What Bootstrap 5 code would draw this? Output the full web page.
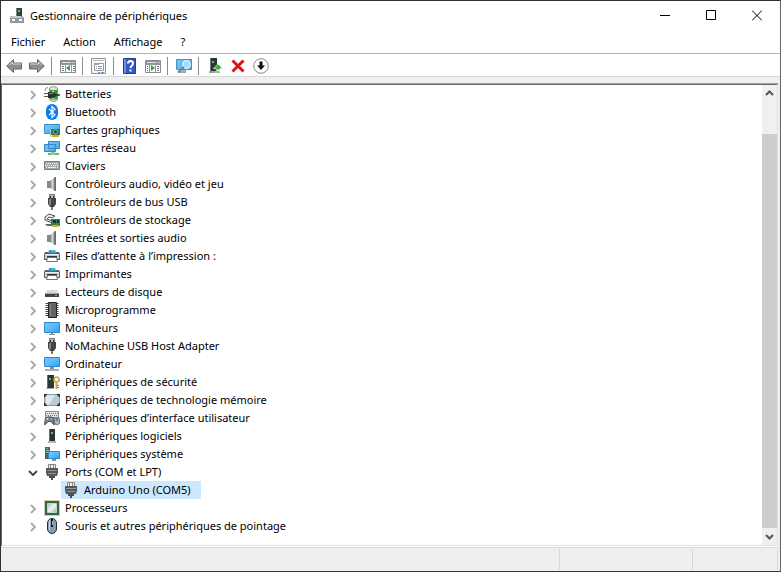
<!DOCTYPE html>
<html lang="fr">
<head>
<meta charset="utf-8">
<meta name="viewport" content="width=device-width, initial-scale=1">
<title>Gestionnaire de périphériques</title>
<link href="https://cdn.jsdelivr.net/npm/bootstrap@5.3.0/dist/css/bootstrap.min.css" rel="stylesheet">
<style>
body{font:11px/18px "Noto Sans","Open Sans",sans-serif;color:#000;background:#fff}
button,a{color:inherit;font:inherit}
button{background:none;border:0;padding:0}
.ico{width:16px;height:16px;flex:none;display:block}
.window{border:1px solid #30323a;border-right-color:#62656b;cursor:default}
.titlebar{height:30px;padding-left:8px;gap:5px}
.caption{width:46px;height:29px}
.menubar{height:23px;padding-left:10px;gap:18px;border-bottom:1px solid #b0b4bf}
.toolbar{height:23px;padding:1px 0 0 2px;border-bottom:1px solid #d9d9d9}
.tool{width:23px;height:20px;padding-left:3px}
.divider{width:1px;height:18px;margin:0 5px 0 2px;background:#8c8c8c}
.workarea{padding:7px 2px 1px 0;background:#efefef}
.pane{background:#fff;border:1px solid #e3e3e3;border-top-color:#696969;border-left-color:#696969;box-shadow:0 -1px #a0a0a0,0 1px #fff}
.tree-row{height:18px;padding-left:22px;gap:5px}
.twisty{width:15px;height:18px}
.twisty svg{display:block;margin-top:1px}
.child{padding-left:59px}
.picked{background:#cce8ff;padding:0 10px 0 2px;gap:5px;height:18px}
.scroller{width:15px;background:#f0f0f0}
.scroller button{height:17px;width:15px}
.thumb{background:#cdcdcd;margin-top:32px}
.statusbar{height:24px;background:#efefef;border-top:1px solid #d7d7d7;padding:1px 2px}
.cell{border-right:1px solid #d7d7d7}
.cell-mid{width:133px}
.cell-end{width:85px}
</style>
</head>
<body>
<svg width="0" height="0" class="position-absolute" aria-hidden="true">
<defs>
<linearGradient id="sky" x1="0" y1="0" x2="1" y2="1"><stop offset="0" stop-color="#72c9fa"/><stop offset=".5" stop-color="#5bbcf8"/><stop offset="1" stop-color="#2e9ff0"/></linearGradient>
<linearGradient id="steel" x1="0" y1="0" x2="0" y2="1"><stop offset="0" stop-color="#b8b8b8"/><stop offset=".5" stop-color="#888"/><stop offset="1" stop-color="#aaa"/></linearGradient>
<linearGradient id="cone" x1="0" y1="0" x2="1" y2="0"><stop offset="0" stop-color="#777"/><stop offset=".5" stop-color="#ddd"/><stop offset="1" stop-color="#666"/></linearGradient>
<linearGradient id="silver" x1="0" y1="0" x2="1" y2="1"><stop offset="0" stop-color="#b4bdbd"/><stop offset=".5" stop-color="#f2f2f2"/><stop offset="1" stop-color="#a7b0b3"/></linearGradient>
<symbol id="app" viewBox="0 0 16 16"><path fill="#3c4040" d="M7 0h6v9H7z"/><path fill="#7b8080" d="M7 0h1v9H7z"/><path fill="#38e038" d="M9 2h2v2H9z"/><path fill="#747878" d="M2 8h11l2 2v5H1v-5z"/><path fill="#c9cccc" d="M3 8h9l2 2H1z"/><path fill="#92999b" d="M1 10h14v5H1z"/><path fill="#fff" d="M3 11h3v2H3zm7 0h3v2h-3z"/></symbol>
<symbol id="back" viewBox="0 0 16 16"><path fill="url(#steel)" stroke="#626262" d="M.7 8 7.500 1.500v3.500h8v6h-8v3.500z"/><path stroke="#d4d4d4" d="M3 7.500 6.500 4v2H15" fill="none"/></symbol>
<symbol id="forward" viewBox="0 0 16 16"><path fill="url(#steel)" stroke="#626262" d="M15.300 8 8.500 1.500v3.500h-8v6h8v3.500z"/><path stroke="#d4d4d4" d="M13 7.500 9.500 4v2H1" fill="none"/></symbol>
<symbol id="panes" viewBox="0 0 16 16"><path fill="#fff" stroke="#858b91" d="M.5 2.500h15v12H.5z"/><path fill="#8c949c" d="M1 3h14v3H1z"/><path fill="#dce3e9" d="M2 4h9v1H2zm10 0h1v1h-1zm2 0h1v1h-1z"/><path stroke="#9298a0" d="M1 6.500h14M5.500 7v7M11.500 7v7"/><path stroke="#717a84" d="M2 8.500h2m-2 2h2m-2 2h2m9-4h2m-2 2h2m-2 2h2"/><path fill="#32a52c" d="M10 7v6L6 10z"/></symbol>
<symbol id="details" viewBox="0 0 16 16"><path fill="#fff" stroke="#858b91" d="M.5 2.500h15v12H.5z"/><path fill="#8c949c" d="M1 3h14v3H1z"/><path fill="#dce3e9" d="M2 4h9v1H2zm10 0h1v1h-1zm2 0h1v1h-1z"/><path stroke="#9298a0" d="M1 6.500h14M4.500 7v7M10.500 7v7"/><path stroke="#717a84" d="M2 8.500h1m-1 2h1m-1 2h1m9-4h2m-2 2h2m-2 2h2"/><path fill="#32a52c" d="M6 7v6l4-3z"/></symbol>
<symbol id="props" viewBox="0 0 16 16"><path fill="#f7f8f9" stroke="#8d9297" d="M.5.500h14v15H.5z"/><path fill="#b5bbc1" d="M2 2h11v1H2z"/><path fill="#fff" stroke="#929aa2" d="M3.500 5.500h9v7h-9z"/><path fill="#9ba4ae" d="M3 5h5v2H3z"/><path stroke="#89929c" d="M5 8.500h1m1 0h4M5 10.500h1m1 0h4M7 14.500h2m1 0h3"/></symbol>
<symbol id="help" viewBox="0 0 16 16"><path fill="#3159be" stroke="#233c91" d="M1.500.500h12v15h-12z"/><path fill="#6f8ee0" d="M2 1h2v14H2z"/><path d="M6 5.500Q6 3 8.500 3T11 5.500Q11 7 9.500 8 8.500 8.700 8.500 10M8.500 11.500v2" stroke="#fff" stroke-width="2" fill="none"/></symbol>
<symbol id="scan" viewBox="0 0 16 16"><path fill="url(#sky)" stroke="#4a91bb" d="M.5 1.500h15v10H.5z"/><path fill="#9eabb3" d="M6 12h4v2H6zm-4 1h8v2H2z"/><circle cx="10.500" cy="6.500" r="3.700" fill="#9edbfa" stroke="#dceff8" stroke-width="1.500"/><path stroke="#6f7f89" stroke-width="1.700" d="m8 9-6 5.500"/></symbol>
<symbol id="update" viewBox="0 0 16 16"><path fill="#303434" d="M3 0h7v15H3z"/><path fill="#777" d="M3 0h1v14H3z"/><path fill="#a2a2a2" d="M2 13h9v2H2z"/><path fill="#42df44" d="M5 3h2v2H5z"/><path fill="#2bb52f" stroke="#fff" stroke-width=".6" d="m11 6 4.700 4.500H13V12H9v-1.500H6.300zM9 13h4v2H9z"/></symbol>
<symbol id="remove" viewBox="0 0 16 16"><path stroke="#d8131b" stroke-width="3" d="m2.500 2.500 11 11m0-11-11 11"/></symbol>
<symbol id="disable" viewBox="0 0 16 16"><circle cx="8" cy="8" r="7.300" fill="#fff" stroke="#888"/><path fill="#111" d="M6.500 3.500h3v4H12L8 12 4 7.500h2.500z"/></symbol>
<symbol id="battery" viewBox="0 0 16 16"><path fill="#dde2df" stroke="#777" stroke-width=".7" d="M5.500 2Q6 .7 9.500 .7T13.500 2v12q-1 1.500-4 1.500T5.500 14z"/><path fill="#2a9e30" d="M6 3.500q3.500 1 7.500 0V13q-3.500 1.500-7.500 0z"/><path fill="#8fe87a" d="M8 4.500h2V7H8zm0 7.500h3v1H8z"/><path fill="none" stroke="#8a8a8a" d="M1 5Q1 1.500 4 1.500"/><path fill="#303030" d="M4 6h3l3 .5q2 .7 2 2.500t-2 2.500L7 12H4z"/><path stroke="#303030" stroke-width="1.600" d="M11 9h5"/><path stroke="#888" d="M5 7.500h4"/><path stroke="#6d5531" stroke-width="1.200" d="M0 7.500h4M0 10.500h4"/></symbol>
<symbol id="bt" viewBox="0 0 16 16"><rect x="2" width="12" height="16" rx="6" fill="#087ee8"/><path d="m5 4.800 6 6-3 2.700V2.500l3 2.700-6 6" fill="none" stroke="#fff" stroke-width="1.200"/></symbol>
<symbol id="gpu" viewBox="0 0 16 16"><path fill="url(#sky)" stroke="#398dc6" d="M.5 2.500h15v9H.5z"/><path fill="#2f7c5e" d="M6 7h10v6H6z"/><path fill="#a6c2b0" d="M6 7h1v8H6z"/><circle cx="11.500" cy="9.800" r="2" fill="#174e3b" stroke="#85aa92"/><path fill="#e5a925" d="M8 13h7v2H8z"/></symbol>
<symbol id="net" viewBox="0 0 16 16"><path fill="url(#sky)" stroke="#3589c4" d="M4.500 1.500h11v7h-11zM.5 4.500h11v7H.5z"/><path fill="#67b978" d="M8 12h3v1h4v2H4v-2h4z"/><path fill="#a3c1aa" d="M7 12h4v3H7z"/></symbol>
<symbol id="kbd" viewBox="0 0 16 16"><path fill="#a5aaad" stroke="#777d80" d="M.5 3.500h15v8H.5z"/><path stroke="#fff" stroke-dasharray="1 1" d="M2 5.500h12M1 7.500h14"/><path stroke="#eee" d="M2 9.500h1m1 0h8m1 0h1"/></symbol>
<symbol id="sound" viewBox="0 0 16 16"><path fill="#7f8b94" d="M3 5h3v7H3z"/><path fill="url(#cone)" d="m6 5 5-4v14l-5-3z"/><path fill="#676c70" d="M11 1h1v14h-1z"/></symbol>
<symbol id="usb" viewBox="0 0 16 16"><path fill="#bbb" stroke="#777" d="M5.500.500h5v4h-5z"/><path fill="#333" d="M6 2h1v2H6zm3 0h1v2H9z"/><path fill="#444" d="M4 4h8v6l-2 3H6l-2-3z"/><path fill="#858585" d="M5 5h2v6H5z"/><path fill="#777" d="M7 13h2v3H7z"/></symbol>
<symbol id="storage" viewBox="0 0 16 16"><path fill="#eee" stroke="#4d5252" d="m1 5 4-3 6 2-3 2-3-1-2 2 5 2v2L1 8z"/><path fill="#318351" d="M7 7h9v7H7z"/><path fill="#113e29" d="M9 8h3v3H9zm4 0h2v3h-2z"/><path fill="#e0aa2c" d="M8 13h7v2H8z"/><path fill="#666" d="M1 12h7v2H3z"/></symbol>
<symbol id="printer" viewBox="0 0 16 16"><path fill="#4098d2" d="M5 2h6l1 3H4z"/><path fill="#43d08a" d="M8 2h2v2H8z"/><path fill="#5d6367" d="M1 4h3l1 1h6l1-1h3l1 2v6H0V6z"/><path fill="#c5cbce" d="M1 6h14v5H1z"/><path fill="#e9ecee" d="M1 6h14v1H1z"/><path fill="#303436" d="M3 8h10v2H3z"/><path fill="#fff" stroke="#6d7376" d="M3.500 9.500h9l1 4h-11z"/><path stroke="#303436" d="M3 8.500h10"/></symbol>
<symbol id="disk" viewBox="0 0 16 16"><path fill="#d8d9d9" d="m3 6 10 0 2 4H1z"/><path fill="#404444" d="M1 9h14v4H1z"/><path fill="#a9adad" d="M1 9h14v1H1z"/><path fill="#44df47" d="M11 11h2v1h-2z"/></symbol>
<symbol id="chip" viewBox="0 0 16 16"><path stroke="#444" stroke-dasharray="1 1" stroke-width="13" d="M8 1v14"/><path fill="#626562" stroke="#242624" d="M4.500.500h8v15h-8z"/><path fill="#888b88" d="M6 2h1v12H6z"/></symbol>
<symbol id="monitor" viewBox="0 0 16 16"><path fill="url(#sky)" stroke="#3089c8" d="M.5 2.500h15v10H.5z"/><path fill="#83949f" d="M7 13h2v1H7zm-2 1h6v1H5z"/></symbol>
<symbol id="pc" viewBox="0 0 16 16"><path fill="url(#sky)" stroke="#3089c8" d="M.5 1.500h15v9H.5z"/><path fill="#819099" d="M6 11h4v2H6z"/><path fill="#a5b0b7" d="M1 13h14v2H1z"/></symbol>
<symbol id="key" viewBox="0 0 16 16"><path fill="#303434" d="M3 1h7v13H3z"/><path fill="#6c7070" d="M3 1h1v13H3z"/><path fill="#aaa" d="M2 14h8v1H2z"/><path fill="#35df3b" d="M5 4h2v2H5z"/><circle cx="12.500" cy="5.500" r="2.500" fill="none" stroke="#d4a24d" stroke-width="1.700"/><path stroke="#d4a24d" stroke-width="2" d="M12.500 8v7"/><path stroke="#b67a22" d="M13 11.500h2m-2 2h2"/></symbol>
<symbol id="memory" viewBox="0 0 16 16"><rect x=".5" y="2.500" width="15" height="11" rx="2" fill="#b7cbdc" stroke="#8799a8"/><path fill="#dce7ef" d="M3 3h8L5 13H2V4z"/><path stroke="#29333b" stroke-width="1.500" fill="none" d="M.7 5V2.700H3M13 2.700h2.300V5M.7 11v2.300H3m10 0h2.300V11"/></symbol>
<symbol id="hid" viewBox="0 0 16 16"><path fill="#e2e4e5" stroke="#898e91" d="M1.500 1.500h13v6h-13z"/><path stroke="#777" stroke-dasharray="1 1" d="M3 3.500h11M2 5.500h12"/><path fill="#7b8186" stroke="#4e5357" d="M.5 14.500 1.500 8l2-1h4l2 1 1 6.500h-1L7 11.500H4l-2.500 3z"/><circle cx="3.500" cy="9" r="1" fill="#ddd"/><circle cx="7.500" cy="9" r="1" fill="#62bdf4"/><rect x="10.500" y="7.500" width="5" height="7" rx="2" fill="#aeb6bb" stroke="#626a6f"/><path stroke="#444" d="M13 8v3"/></symbol>
<symbol id="soft" viewBox="0 0 16 16"><path fill="#303232" d="M5 1h6v13H5z"/><path fill="#666" d="M5 1h1v13H5z"/><path fill="#b8b8b8" d="M4 13h8v2H4z"/><path fill="#38db3d" d="M7 4h2v2H7z"/></symbol>
<symbol id="sys" viewBox="0 0 16 16"><path fill="#555d60" d="M1 1h5v12H1z"/><path fill="#a9b1b4" d="M2 4h3v1H2zm0 2h3v1H2z"/><path fill="#3bd443" d="M2 2h2v1H2z"/><path fill="url(#sky)" stroke="#3089c8" d="M4.500 5.500h11v7h-11z"/><path fill="#81919b" d="M8 13h4v2H8z"/></symbol>
<symbol id="port" viewBox="0 0 16 16"><path fill="#eee" stroke="#888" d="M4.500.500h7v4h-7z"/><path stroke="#888" d="M6.500 1v3m3-3v3"/><path fill="#55585a" d="M2 4h12v5l-1 3H3L2 9z"/><path stroke="#929698" d="M3 6.500h10M4 9.500h8"/><path fill="#494d50" d="M5 12h6v2H9v2H7v-2H5z"/></symbol>
<symbol id="cpu" viewBox="0 0 16 16"><path fill="none" stroke="#bd9c55" stroke-dasharray="1 1" d="M.5.500h15v15H.5z"/><path fill="#2b694d" d="M1 1h14v14H1z"/><path fill="url(#silver)" stroke="#c4d4ca" d="M3.500 3.500h9v9h-9z"/></symbol>
<symbol id="mouse" viewBox="0 0 16 16"><rect x="3.500" y=".5" width="9" height="15" rx="4.500" fill="#8a9dac" stroke="#272d32"/><path fill="#d0dae1" d="M5 2h1v10H5z"/><path stroke="#18212a" stroke-width="2" d="M8 1v8"/><path stroke="#8ab9dc" d="M8.500 3v4"/></symbol>
<symbol id="closed" viewBox="0 0 14 18"><path fill="none" stroke="#a6a6a6" stroke-width="1.800" d="m7 5 4 4-4 4"/></symbol>
<symbol id="opened" viewBox="0 0 14 18"><path fill="none" stroke="#404040" stroke-width="1.800" d="m5 7 4 4 4-4"/></symbol>
</defs>
</svg>
<div class="window min-vh-100 d-flex flex-column">
<header class="titlebar d-flex align-items-center">
<svg class="ico"><use href="#app"/></svg><span class="flex-grow-1">Gestionnaire de périphériques</span>
<div class="d-flex align-self-start">
<button class="caption" aria-label="Réduire"><svg class="d-block mx-auto" width="10" height="11"><path stroke="#000" d="M0 5.500h10"/></svg></button>
<button class="caption" aria-label="Agrandir"><svg class="d-block mx-auto" width="10" height="11"><path fill="none" stroke="#000" d="M.5.500h9v9h-9z"/></svg></button>
<button class="caption" aria-label="Fermer"><svg class="d-block mx-auto" width="10" height="11"><path stroke="#000" d="m0 .500 10 10m0-10-10 10"/></svg></button>
</div>
</header>
<nav class="menubar d-flex align-items-center" aria-label="Menu"><button>Fichier</button><button>Action</button><button>Affichage</button><button>?</button></nav>
<div class="toolbar d-flex align-items-center" role="toolbar" aria-label="Outils">
<button class="tool" aria-label="Précédent"><svg class="ico"><use href="#back"/></svg></button>
<button class="tool" aria-label="Suivant"><svg class="ico"><use href="#forward"/></svg></button>
<span class="divider"></span>
<button class="tool" aria-label="Arborescence"><svg class="ico"><use href="#panes"/></svg></button>
<span class="divider"></span>
<button class="tool" aria-label="Propriétés"><svg class="ico"><use href="#props"/></svg></button>
<span class="divider"></span>
<button class="tool" aria-label="Aide"><svg class="ico"><use href="#help"/></svg></button>
<button class="tool" aria-label="Volet Actions"><svg class="ico"><use href="#details"/></svg></button>
<span class="divider"></span>
<button class="tool" aria-label="Rechercher les modifications"><svg class="ico"><use href="#scan"/></svg></button>
<span class="divider"></span>
<button class="tool" aria-label="Mettre à jour"><svg class="ico"><use href="#update"/></svg></button>
<button class="tool" aria-label="Désinstaller"><svg class="ico"><use href="#remove"/></svg></button>
<button class="tool" aria-label="Désactiver"><svg class="ico"><use href="#disable"/></svg></button>
</div>
<main class="workarea flex-grow-1 d-flex">
<div class="pane flex-grow-1 d-flex">
<ul class="list-unstyled mb-0 flex-grow-1" id="tree"></ul>
<div class="scroller d-flex flex-column">
<button aria-label="Défiler vers le haut"><svg class="d-block mx-auto" width="9" height="9"><path fill="none" stroke="#555" stroke-width="2" d="m1 6 3.500-3.500L8 6"/></svg></button>
<div class="thumb flex-grow-1"></div>
<button aria-label="Défiler vers le bas"><svg class="d-block mx-auto" width="9" height="9"><path fill="none" stroke="#555" stroke-width="2" d="m1 3 3.500 3.500L8 3"/></svg></button>
</div>
</div>
</main>
<footer class="statusbar d-flex"><div class="cell flex-grow-1"></div><div class="cell cell-mid"></div><div class="cell cell-end"></div></footer>
</div>
<script src="https://cdn.jsdelivr.net/npm/bootstrap@5.3.0/dist/js/bootstrap.bundle.min.js"></script>
<script>
const devices=[["battery","Batteries"],["bt","Bluetooth"],["gpu","Cartes graphiques"],["net","Cartes réseau"],["kbd","Claviers"],["sound","Contrôleurs audio, vidéo et jeu"],["usb","Contrôleurs de bus USB"],["storage","Contrôleurs de stockage"],["sound","Entrées et sorties audio"],["printer","Files d’attente à l’impression :"],["printer","Imprimantes"],["disk","Lecteurs de disque"],["chip","Microprogramme"],["monitor","Moniteurs"],["usb","NoMachine USB Host Adapter"],["pc","Ordinateur"],["key","Périphériques de sécurité"],["memory","Périphériques de technologie mémoire"],["hid","Périphériques d’interface utilisateur"],["soft","Périphériques logiciels"],["sys","Périphériques système"],["port","Ports (COM et LPT)",["Arduino Uno (COM5)"]],["cpu","Processeurs"],["mouse","Souris et autres périphériques de pointage"]];
const icon=n=>`<svg class="ico"><use href="#${n}"/></svg>`;
document.getElementById("tree").innerHTML=devices.map(([i,name,kids])=>
`<li><div class="tree-row d-flex align-items-center"><button class="twisty" aria-label="${name}" aria-expanded="${!!kids}"><svg width="14" height="18"><use href="#${kids?"opened":"closed"}"/></svg></button>${icon(i)}<span>${name}</span></div>${kids?`<ul class="list-unstyled">${kids.map(k=>`<li class="child d-flex"><div class="picked d-flex align-items-center">${icon(i)}<span>${k}</span></div></li>`).join("")}</ul>`:""}</li>`).join("");
</script>
</body>
</html>
